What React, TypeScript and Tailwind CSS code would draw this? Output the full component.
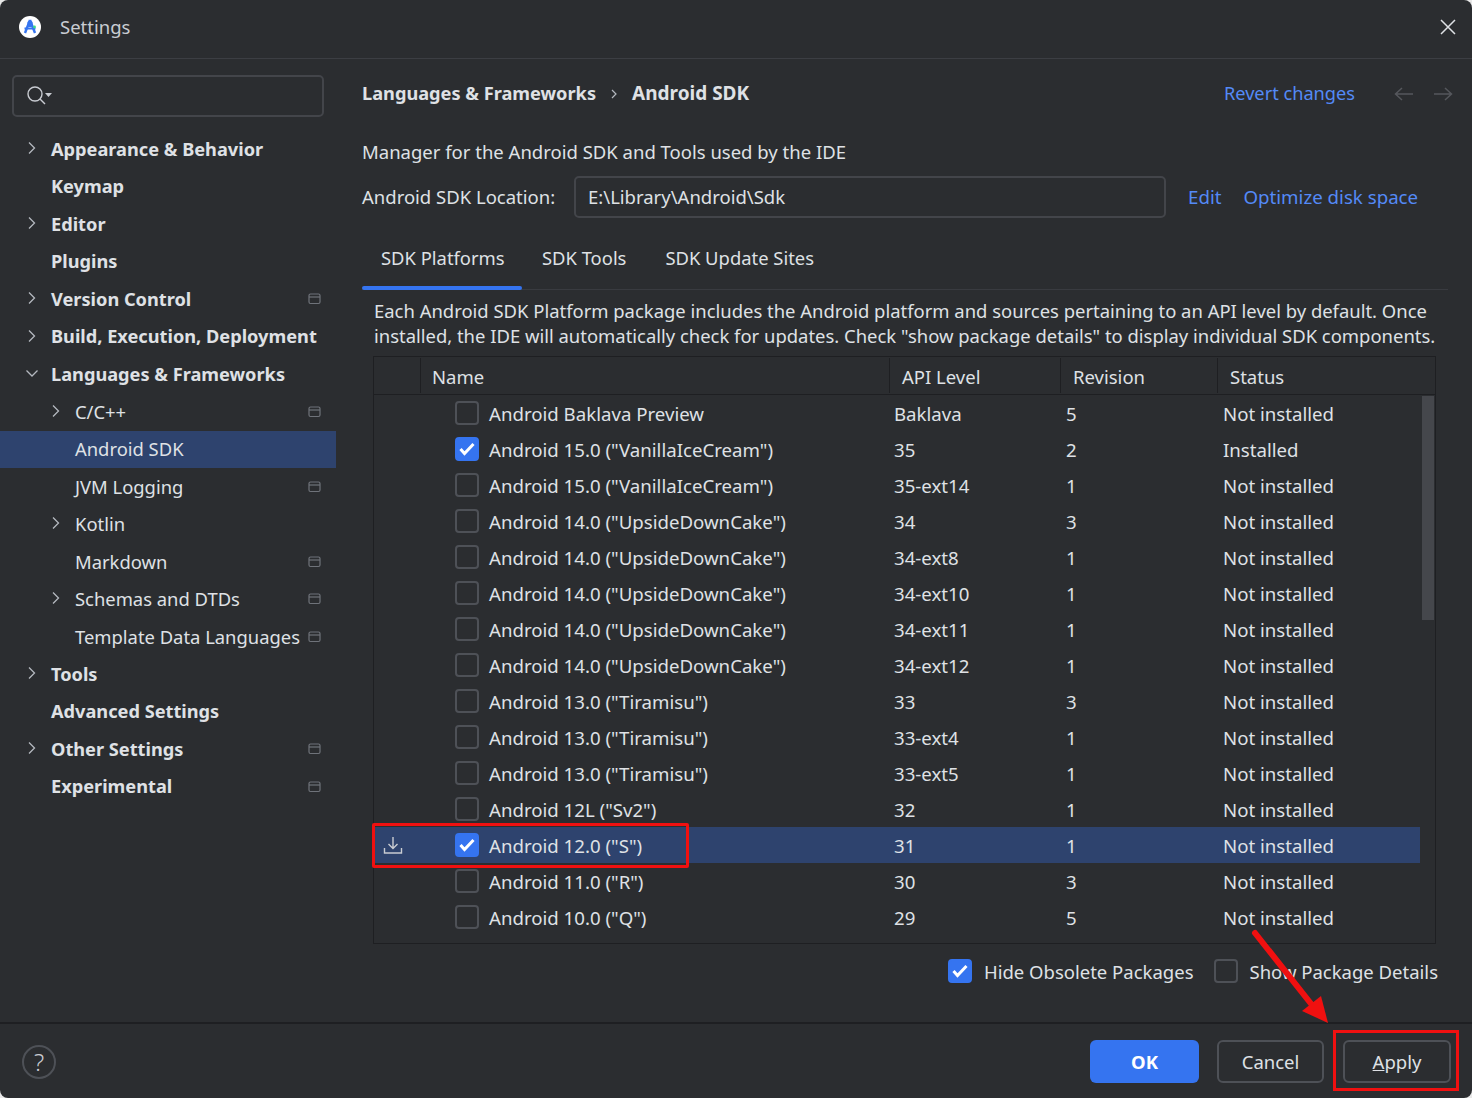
import React from "react";

const Chevron = ({ open = false }: { open?: boolean }) => (
  <svg width="12" height="12" viewBox="0 0 12 12" fill="none" stroke="#b4b8bf" strokeWidth="1.3">
    {open ? <path d="M0.5 3.5 L6 9 L11.5 3.5" /> : <path d="M3 0.5 L8.5 6 L3 11.5" />}
  </svg>
);

const ProjIcon = () => (
  <svg width="14" height="12" viewBox="0 0 14 12" fill="none" stroke="#6f737a" strokeWidth="1.2">
    <rect x="1" y="1" width="11" height="9.5" rx="1.5" />
    <path d="M1 4 H12" />
  </svg>
);

const Check = ({ on = false }: { on?: boolean }) => (
  <div
    className={
      "flex h-6 w-6 shrink-0 items-center justify-center rounded-[4px] border-2 " +
      (on ? "border-[#3574f0] bg-[#3574f0]" : "border-[#4e5157] bg-transparent")
    }
  >
    {on && (
      <svg width="16" height="14" viewBox="0 0 16 14" fill="none" stroke="#fff" strokeWidth="3">
        <path d="M1.500 7 L5.500 11.500 L14.500 2" />
      </svg>
    )}
  </div>
);

type TreeItem = { t: string; l: 0 | 1; bold?: boolean; arrow?: "r" | "d"; proj?: boolean; sel?: boolean };
const tree: TreeItem[] = [
  { t: "Appearance & Behavior", l: 0, bold: true, arrow: "r" },
  { t: "Keymap", l: 0, bold: true },
  { t: "Editor", l: 0, bold: true, arrow: "r" },
  { t: "Plugins", l: 0, bold: true },
  { t: "Version Control", l: 0, bold: true, arrow: "r", proj: true },
  { t: "Build, Execution, Deployment", l: 0, bold: true, arrow: "r" },
  { t: "Languages & Frameworks", l: 0, bold: true, arrow: "d" },
  { t: "C/C++", l: 1, arrow: "r", proj: true },
  { t: "Android SDK", l: 1, sel: true },
  { t: "JVM Logging", l: 1, proj: true },
  { t: "Kotlin", l: 1, arrow: "r" },
  { t: "Markdown", l: 1, proj: true },
  { t: "Schemas and DTDs", l: 1, arrow: "r", proj: true },
  { t: "Template Data Languages", l: 1, proj: true },
  { t: "Tools", l: 0, bold: true, arrow: "r" },
  { t: "Advanced Settings", l: 0, bold: true },
  { t: "Other Settings", l: 0, bold: true, arrow: "r", proj: true },
  { t: "Experimental", l: 0, bold: true, proj: true },
];

type Row = { n: string; a: string; r: string; s?: string; on?: boolean; sel?: boolean };
const rows: Row[] = [
  { n: "Android Baklava Preview", a: "Baklava", r: "5" },
  { n: 'Android 15.0 ("VanillaIceCream")', a: "35", r: "2", s: "Installed", on: true },
  { n: 'Android 15.0 ("VanillaIceCream")', a: "35-ext14", r: "1" },
  { n: 'Android 14.0 ("UpsideDownCake")', a: "34", r: "3" },
  { n: 'Android 14.0 ("UpsideDownCake")', a: "34-ext8", r: "1" },
  { n: 'Android 14.0 ("UpsideDownCake")', a: "34-ext10", r: "1" },
  { n: 'Android 14.0 ("UpsideDownCake")', a: "34-ext11", r: "1" },
  { n: 'Android 14.0 ("UpsideDownCake")', a: "34-ext12", r: "1" },
  { n: 'Android 13.0 ("Tiramisu")', a: "33", r: "3" },
  { n: 'Android 13.0 ("Tiramisu")', a: "33-ext4", r: "1" },
  { n: 'Android 13.0 ("Tiramisu")', a: "33-ext5", r: "1" },
  { n: 'Android 12L ("Sv2")', a: "32", r: "1" },
  { n: 'Android 12.0 ("S")', a: "31", r: "1", on: true, sel: true },
  { n: 'Android 11.0 ("R")', a: "30", r: "3" },
  { n: 'Android 10.0 ("Q")', a: "29", r: "5" },
];

export default function App() {
  return (
    <div className="relative h-[1098px] w-[1472px] overflow-hidden bg-[#e8e8e8]">
      <div
        className="flex h-full w-full flex-col rounded-[8px] bg-[#2b2d30] text-[18.5px] text-[#dfe1e5]"
        style={{ fontFamily: '"Noto Sans", "Open Sans", sans-serif' }}
      >
        {/* Title bar */}
        <div className="flex h-[59px] shrink-0 items-center border-b border-[#3c3e43] pb-[4px] pl-[19px] pr-[16px]">
          <svg width="22" height="22" viewBox="0 0 22 22">
            <circle cx="11" cy="11" r="11" fill="#fff" />
            <path d="M11 4 L6 17 M11 4 L16 17" stroke="#3574f0" strokeWidth="2.4" fill="none" />
            <rect x="8.5" y="5" width="5" height="6" rx="1.5" fill="#3574f0" />
            <rect x="5.5" y="11.5" width="11" height="2" fill="#3574f0" />
            <circle cx="15.5" cy="11" r="1.4" fill="#3ddc84" />
          </svg>
          <span className="ml-[19px] text-[#c9ccd2]">Settings</span>
          <svg className="ml-auto" width="16" height="16" viewBox="0 0 16 16" stroke="#dfe1e5" strokeWidth="1.5">
            <path d="M1 1 L15 15 M15 1 L1 15" />
          </svg>
        </div>

        {/* Body */}
        <div className="flex min-h-0 flex-1">
          {/* Sidebar */}
          <div className="w-[336px] shrink-0 pt-4">
            <div className="mx-3 flex h-[42px] w-[312px] items-center rounded-[5px] border-2 border-[#43454a] pl-3">
              <svg width="26" height="22" viewBox="0 0 26 22" fill="none" stroke="#c9ccd2" strokeWidth="1.4">
                <circle cx="9" cy="9" r="7" />
                <path d="M14 14 L19 19" />
                <path d="M19 8 H26 L22.500 12 Z" fill="#c9ccd2" stroke="none" />
              </svg>
            </div>
            <div className="pt-[13.5px]">
              {tree.map((it) => (
                <div
                  key={it.t}
                  className={
                    "flex h-[37.5px] items-center pr-[14px] " +
                    (it.sel ? "bg-[#2e436e] " : "") +
                    (it.l === 0 ? "pl-[26px]" : "pl-[50px]")
                  }
                >
                  <div className="mb-[2px] flex w-[25px] shrink-0 items-center">
                    {it.arrow && <Chevron open={it.arrow === "d"} />}
                  </div>
                  <span className={"whitespace-nowrap " + (it.bold ? "text-[18.2px] font-bold" : "pb-[0.5px] text-[18.4px]")}>
                    {it.t}
                  </span>
                  {it.proj && (
                    <div className="ml-auto flex shrink-0 items-center">
                      <ProjIcon />
                    </div>
                  )}
                </div>
              ))}
            </div>
          </div>

          {/* Main */}
          <div className="flex min-w-0 flex-1 flex-col pl-[26px]">
            <div className="flex h-[69px] shrink-0 items-center pr-[19px]">
              <span className="text-[18.2px] font-bold">Languages &amp; Frameworks</span>
              <span className="ml-[14px] flex w-[22px] items-center">
                <svg width="8" height="12" viewBox="0 0 8 12" fill="none" stroke="#b4b8bf" strokeWidth="1.2">
                  <path d="M2 2 L6 6 L2 10" />
                </svg>
              </span>
              <span className="text-[19px] font-bold">Android SDK</span>
              <span className="ml-auto text-[18.2px] text-[#548af7]">Revert changes</span>
              <svg className="ml-[39px]" width="20" height="16" viewBox="0 0 20 16" fill="none" stroke="#55575c" strokeWidth="1.5">
                <path d="M19 8 H1.500 M8 2 L1.500 8 L8 14" />
              </svg>
              <svg className="ml-[19px]" width="20" height="16" viewBox="0 0 20 16" fill="none" stroke="#55575c" strokeWidth="1.5">
                <path d="M1 8 H18.500 M12 2 L18.500 8 L12 14" />
              </svg>
            </div>

            <div className="flex h-[48px] shrink-0 items-center">Manager for the Android SDK and Tools used by the IDE</div>

            <div className="flex h-[42px] shrink-0 items-center">
              <span className="w-[212px] shrink-0">Android SDK Location:</span>
              <div className="flex h-[42px] w-[592px] items-center rounded-[5px] border-2 border-[#43454a] pl-3">
                E:\Library\Android\Sdk
              </div>
              <span className="ml-[22px] text-[18.7px] text-[#548af7]">Edit</span>
              <span className="ml-[22px] text-[18.7px] text-[#548af7]">Optimize disk space</span>
            </div>

            {/* Tabs */}
            <div className="mt-[16px] flex h-[56px] w-[1086px] shrink-0 border-b border-[#393b40] pb-[7px] text-[18.4px]">
              <div className="relative flex h-full w-[160px] items-center pl-[19px]">
                SDK Platforms
                <div className="absolute bottom-[-8px] left-0 h-[4px] w-[160px] rounded-[2px] bg-[#3574f0]" />
              </div>
              <div className="flex h-full items-center pl-[20px]">SDK Tools</div>
              <div className="flex h-full items-center pl-[39px]">SDK Update Sites</div>
            </div>

            <div className="ml-3 mt-[8px] w-[1072px] shrink-0 whitespace-nowrap text-[18.45px] leading-[25px]">
              Each Android SDK Platform package includes the Android platform and sources pertaining to an API level by default. Once
              <br />
              installed, the IDE will automatically check for updates. Check "show package details" to display individual SDK components.
            </div>

            {/* Table */}
            <div className="ml-[11px] mt-[8px] flex h-[588px] w-[1063px] shrink-0 flex-col overflow-hidden border border-[#1e1f22]">
              <div className="flex h-[38px] shrink-0 items-stretch border-b border-[#1e1f22]">
                <div className="my-[1px] w-[47px] shrink-0 border-r border-[#1e1f22]" />
                <div className="my-[1px] flex w-[469px] shrink-0 items-center border-r border-[#1e1f22] pl-[11px] pt-[2px]">Name</div>
                <div className="my-[1px] flex w-[171px] shrink-0 items-center border-r border-[#1e1f22] pl-[12px] pt-[2px]">API Level</div>
                <div className="my-[1px] flex w-[157px] shrink-0 items-center border-r border-[#1e1f22] pl-[12px] pt-[2px]">Revision</div>
                <div className="my-[1px] flex flex-1 items-center pl-[12px] pt-[2px]">Status</div>
              </div>
              <div className="flex min-h-0 flex-1">
                <div className="min-w-0 flex-1 overflow-hidden">
                  {rows.map((r, i) => (
                    <div key={i} className={"flex h-[36px] items-center text-[18.65px] " + (r.sel ? "bg-[#2e436e]" : "")}>
                      <div className="flex w-[81px] shrink-0 items-center pl-[9px]">
                        {r.sel && (
                          <svg width="20" height="20" viewBox="0 0 20 20" fill="none" stroke="#c9ccd2" strokeWidth="1.4">
                            <path d="M10 2 V13 M5.500 9 L10 13.500 L14.500 9 M1.500 13 V18 H18.500 V13" />
                          </svg>
                        )}
                      </div>
                      <Check on={r.on} />
                      <span className="ml-[10px] w-[405px] shrink-0 whitespace-nowrap pt-[2px]">{r.n}</span>
                      <span className="w-[172px] shrink-0 pt-[2px]">{r.a}</span>
                      <span className="w-[157px] shrink-0 pt-[2px]">{r.r}</span>
                      <span className="pt-[2px]">{r.s ?? "Not installed"}</span>
                    </div>
                  ))}
                  <div className="flex h-[36px] pt-[9px]">
                    <div className="ml-[81px]">
                      <Check />
                    </div>
                  </div>
                </div>
                <div className="w-[15px] shrink-0 pl-[2px] pr-[1px]">
                  <div className="mt-[1px] h-[224px] bg-[#45474c]" />
                </div>
              </div>
            </div>

            <div className="mt-[15px] flex h-[24px] shrink-0 items-center">
              <div className="ml-[586px]">
                <Check on />
              </div>
              <span className="ml-3 whitespace-nowrap pt-[2px]">Hide Obsolete Packages</span>
              <div className="ml-[20px]">
                <Check />
              </div>
              <span className="ml-[12px] whitespace-nowrap pt-[2px]">Show Package Details</span>
            </div>
          </div>
        </div>

        {/* Footer */}
        <div className="flex h-[76px] shrink-0 items-center border-t-2 border-[#1e1f22] pl-[22px] pr-[21px]">
          <div className="mt-[1px] flex h-[34px] w-[34px] items-center justify-center rounded-full border-2 border-[#4e5157] text-[24px] font-light text-[#c9ccd2]">
            ?
          </div>
          <div className="ml-auto flex h-[43px] w-[109px] items-center justify-center rounded-[6px] bg-[#3574f0] pt-[2px] font-bold text-white">OK</div>
          <div className="ml-[18px] flex h-[43px] w-[107px] items-center justify-center rounded-[6px] border-2 border-[#4e5157] pt-[1px]">Cancel</div>
          <div className="ml-[19px] flex h-[43px] w-[108px] items-center justify-center rounded-[6px] border-2 border-[#4e5157] pt-[1px]">
            <span>
              <span className="underline">A</span>pply
            </span>
          </div>
        </div>
      </div>

      {/* Red annotations */}
      <div className="absolute left-[372px] top-[823px] h-[45px] w-[317px] rounded-[2px] border-[3px] border-[#f01010]" />
      <div className="absolute left-[1333px] top-[1030px] h-[61px] w-[126px] border-[3px] border-[#f01010]" />
      <svg className="absolute left-[1240px] top-[920px]" width="110" height="120" viewBox="0 0 110 120">
        <path d="M15 13 L72 85" stroke="#f01010" strokeWidth="6" strokeLinecap="round" />
        <path d="M88 103 L62 91 L81 76 Z" fill="#f01010" />
      </svg>
    </div>
  );
}
